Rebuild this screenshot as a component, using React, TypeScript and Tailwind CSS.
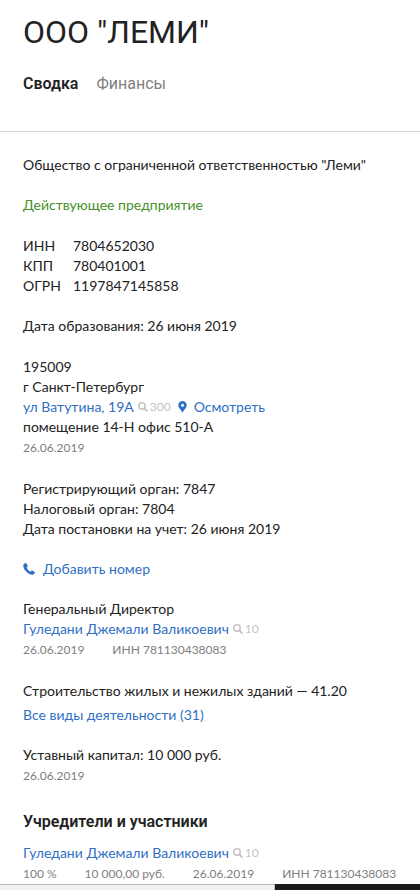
import type { ReactNode } from "react";

function Block({ children, className = "mt-5" }: { children: ReactNode; className?: string }) {
  return <section className={className}>{children}</section>;
}

function Link({ children }: { children: ReactNode }) {
  return (
    <a href="#" className="text-[#2f6fc4]">
      {children}
    </a>
  );
}

function Meta({ items }: { items: string[] }) {
  return (
    <div className="flex gap-7 whitespace-nowrap text-[12px] leading-[22px] text-[#808080]">
      {items.map((item) => (
        <span key={item}>{item}</span>
      ))}
    </div>
  );
}

function SearchCount({ count }: { count: number }) {
  return (
    <a href="#" className="flex items-center gap-[2px] text-[12px] text-[#c4c4c4]">
      <svg width="10" height="10" viewBox="0 0 10 10" fill="none" stroke="currentColor" aria-hidden="true">
        <circle cx="4" cy="4" r="3.2" strokeWidth="1.5" />
        <path d="M6.2 6.200 9.300 9.400" strokeWidth="2" />
      </svg>
      {count}
    </a>
  );
}

function Person() {
  return (
    <div className="flex items-center gap-1 whitespace-nowrap">
      <Link>Гуледани Джемали Валикоевич</Link>
      <SearchCount count={10} />
    </div>
  );
}

const codes = [
  ["ИНН", "7804652030"],
  ["КПП", "780401001"],
  ["ОГРН", "1197847145858"],
];

export default function App() {
  return (
    <div className="h-screen overflow-hidden bg-white font-['Lato','Liberation_Sans',sans-serif] text-[14px] leading-5 text-[#222]">
      <header className="border-b border-[#d5d5d5] px-[23px] pt-3 pb-9 font-['Roboto','Liberation_Sans',sans-serif]">
        <h1 className="text-[32px] leading-10">ООО "ЛЕМИ"</h1>
        <nav className="mt-5 flex gap-[18px] text-[16px] leading-[23px]">
          <a href="#" className="font-semibold">Сводка</a>
          <a href="#" className="text-[#808080]">Финансы</a>
        </nav>
      </header>
      <main className="px-[23px] pt-[23px]">
        <p className="whitespace-nowrap">Общество с ограниченной ответственностью "Леми"</p>
        <p className="mt-5 text-[#4a8f29]">Действующее предприятие</p>
        <table className="mt-[21px] border-collapse">
          <tbody>
            {codes.map(([name, value]) => (
              <tr key={name}>
                <th scope="row" className="w-[50px] p-0 text-left font-normal">{name}</th>
                <td className="p-0">{value}</td>
              </tr>
            ))}
          </tbody>
        </table>
        <p className="mt-5">Дата образования: 26 июня 2019</p>
        <Block className="mt-[21px]">
          <p>195009</p>
          <p>г Санкт-Петербург</p>
          <div className="flex items-center whitespace-nowrap">
            <Link>ул Ватутина, 19А</Link>
            <span className="ml-1">
              <SearchCount count={300} />
            </span>
            <a href="#" className="ml-[7px] flex items-center gap-[7px] text-[#2f6fc4]">
              <svg width="9" height="12" viewBox="0 0 9 12" fill="currentColor" aria-hidden="true">
                <path fillRule="evenodd" d="M4.500 0A4.200 4.200 0 0 0 .3 4.200C.3 7 3.200 8.600 4.500 12 5.800 8.600 8.700 7 8.700 4.200A4.200 4.200 0 0 0 4.500 0Zm0 2.700a1.500 1.500 0 1 1 0 3 1.500 1.500 0 0 1 0-3Z" />
              </svg>
              Осмотреть
            </a>
          </div>
          <p>помещение 14-Н офис 510-А</p>
          <Meta items={["26.06.2019"]} />
        </Block>
        <Block>
          <p>Регистрирующий орган: 7847</p>
          <p>Налоговый орган: 7804</p>
          <p>Дата постановки на учет: 26 июня 2019</p>
        </Block>
        <Block>
          <button type="button" className="flex items-center gap-2 text-[#2f6fc4]">
            <svg width="12" height="12" viewBox="0 0 12 12" fill="currentColor" aria-hidden="true">
              <path d="M2.300.1.800 1C-.4 2.500.6 5.800 2.900 8.300c2.400 2.700 5.500 4 7.300 3.300.6-.3 1.200-1 1.600-1.600.2-.4.100-.7-.2-.9L9.300 7.600c-.3-.2-.7-.1-.9.1l-.9 1C5.900 8 4.300 6.200 3.500 4.500l1-.8c.3-.3.300-.6.200-.9L3.300.4C3.100 0 2.700-.1 2.300.1Z" />
            </svg>
            Добавить номер
          </button>
        </Block>
        <Block>
          <p>Генеральный Директор</p>
          <Person />
          <Meta items={["26.06.2019", "ИНН 781130438083"]} />
        </Block>
        <Block>
          <p className="whitespace-nowrap">Строительство жилых и нежилых зданий — 41.20</p>
          <p className="mt-1">
            <Link>Все виды деятельности (31)</Link>
          </p>
        </Block>
        <Block>
          <p>Уставный капитал: 10 000 руб.</p>
          <Meta items={["26.06.2019"]} />
        </Block>
        <Block className="mt-[22px]">
          <h2 className="mb-2 font-['Roboto','Liberation_Sans',sans-serif] text-[16px] leading-[26px] font-semibold">Учредители и участники</h2>
          <Person />
          <Meta items={["100 %", "10 000,00 руб.", "26.06.2019", "ИНН 781130438083"]} />
        </Block>
      </main>
      <footer className="fixed inset-x-0 bottom-0 flex h-[6px]">
        <div className="w-[275px] border-t border-r border-[#bdbdbd] bg-[#f1f1f1]" />
        <div className="flex-1 bg-[#1b1b1b]" />
      </footer>
    </div>
  );
}
